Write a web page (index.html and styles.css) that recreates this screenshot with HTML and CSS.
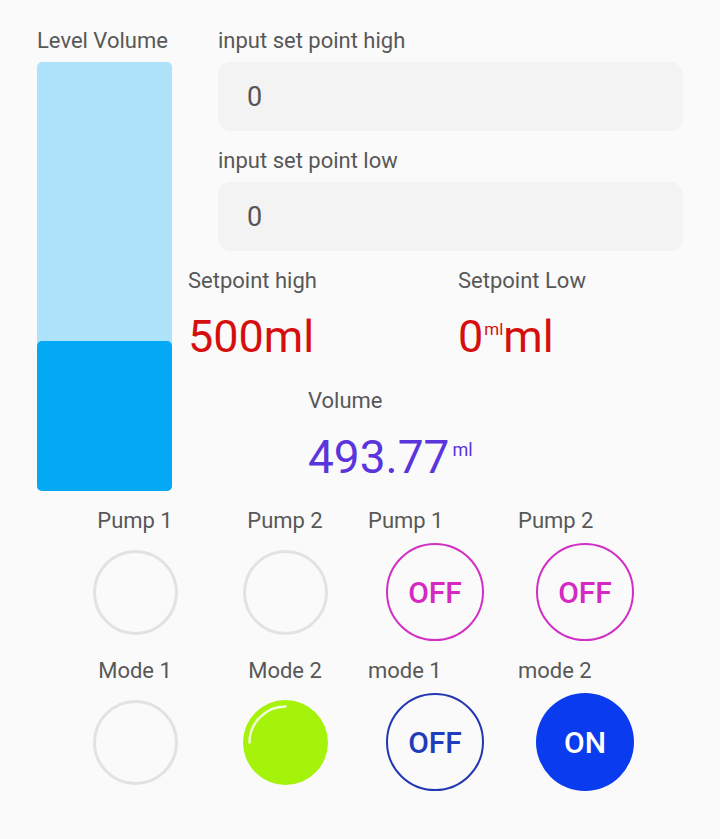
FILE: index.html
```html
<!DOCTYPE html>
<html>
<head>
<meta charset="utf-8">
<link rel="stylesheet" href="styles.css">
</head>
<body>
<div class="page">
  <section class="top">
    <div class="level">
      <div class="label">Level Volume</div>
      <div class="bar"><div class="fill" style="height:35%"></div></div>
    </div>
    <div class="right">
      <div class="inputs">
        <div class="label">input set point high</div>
        <div class="input">0</div>
        <div class="label gap">input set point low</div>
        <div class="input">0</div>
      </div>
      <div class="setpoints">
        <div class="sp">
          <div class="label">Setpoint high</div>
          <div class="big red">500ml</div>
        </div>
        <div class="sp">
          <div class="label">Setpoint Low</div>
          <div class="big red">0<span class="sup sup-red">ml</span>ml</div>
        </div>
      </div>
      <div class="volume">
        <div class="label">Volume</div>
        <div class="big purple">493.77<span class="sup">ml</span></div>
      </div>
    </div>
  </section>
  <section class="grid">
    <div class="cell led-cell">
      <div class="label">Pump 1</div>
      <div class="area"><div class="led"></div></div>
    </div>
    <div class="cell led-cell">
      <div class="label">Pump 2</div>
      <div class="area"><div class="led"></div></div>
    </div>
    <div class="cell btn-cell">
      <div class="label">Pump 1</div>
      <div class="area"><div class="btn magenta">OFF</div></div>
    </div>
    <div class="cell btn-cell">
      <div class="label">Pump 2</div>
      <div class="area"><div class="btn magenta">OFF</div></div>
    </div>
    <div class="cell led-cell">
      <div class="label">Mode 1</div>
      <div class="area"><div class="led"></div></div>
    </div>
    <div class="cell led-cell">
      <div class="label">Mode 2</div>
      <div class="area">
        <div class="led green">
          <svg width="85" height="85" viewBox="0 0 85 85"><path d="M6.5 42.5 A36 36 0 0 1 42.5 6.5" fill="none" stroke="rgba(255,255,255,0.85)" stroke-width="2.5" stroke-linecap="round"/></svg>
        </div>
      </div>
    </div>
    <div class="cell btn-cell">
      <div class="label">mode 1</div>
      <div class="area"><div class="btn blue-off">OFF</div></div>
    </div>
    <div class="cell btn-cell">
      <div class="label">mode 2</div>
      <div class="area"><div class="btn blue-on">ON</div></div>
    </div>
  </section>
</div>
</body>
</html>
```
FILE: styles.css
```css
html, body {
  margin: 0;
  padding: 0;
  background: #fafafa;
}
body {
  font-family: Roboto, "Liberation Sans", sans-serif;
  color: #555;
  width: 720px;
  height: 839px;
  overflow: hidden;
}
.page {
  padding-top: 28px;
}
.label {
  font-size: 22px;
  line-height: 26px;
  color: #585858;
  white-space: nowrap;
}
.top {
  display: flex;
  padding-left: 37px;
}
.level {
  width: 135px;
  flex: none;
  display: flex;
  flex-direction: column;
  gap: 8px;
}
.bar {
  height: 429px;
  background: #ade2fb;
  border-radius: 5px;
  display: flex;
  flex-direction: column;
  justify-content: flex-end;
}
.fill {
  background: #03a9f4;
  border-radius: 5px;
}
.right {
  margin-left: 16px;
  width: 495px;
  flex: none;
  display: flex;
  flex-direction: column;
}
.inputs {
  margin-left: 30px;
  display: flex;
  flex-direction: column;
}
.inputs .label {
  margin-bottom: 8px;
}
.inputs .label.gap {
  margin-top: 17px;
}
.input {
  height: 69px;
  background: #f3f3f3;
  border-radius: 13px;
  display: flex;
  align-items: center;
  padding-left: 29px;
  font-size: 27px;
  color: #555;
}
.setpoints {
  display: grid;
  grid-template-columns: 270px 1fr;
  margin-top: 17px;
}
.sp {
  display: flex;
  flex-direction: column;
  gap: 16px;
}
.big {
  font-size: 45px;
  line-height: 54px;
  white-space: nowrap;
}
.red {
  color: #d50e0e;
}
.purple {
  color: #5a35dc;
  font-size: 46px;
}
.sup {
  font-size: 18px;
  vertical-align: top;
  position: relative;
  top: 10px;
  margin-left: 3px;
  line-height: 20px;
}
.sup-red {
  font-size: 17px;
  top: 9px;
  margin-left: 1px;
  margin-right: 0;
}
.volume {
  margin-left: 120px;
  margin-top: 24px;
  display: flex;
  flex-direction: column;
  gap: 16px;
}
.grid {
  margin-top: 17px;
  padding-left: 60px;
  display: grid;
  grid-template-columns: repeat(4, 150px);
  row-gap: 16px;
}
.cell {
  display: flex;
  flex-direction: column;
  gap: 8px;
}
.led-cell .label {
  text-align: center;
}
.btn-cell .label {
  padding-left: 8px;
}
.area {
  height: 100px;
  display: flex;
  align-items: center;
  justify-content: center;
}
.led {
  width: 85px;
  height: 85px;
  box-sizing: border-box;
  border-radius: 50%;
  border: 3px solid #e2e2e2;
}
.led.green {
  border: none;
  background: #a5f20b;
  position: relative;
}
.led.green svg {
  display: block;
}
.btn {
  width: 98px;
  height: 98px;
  box-sizing: border-box;
  border-radius: 50%;
  display: flex;
  align-items: center;
  justify-content: center;
  font-size: 30px;
  font-weight: 500;
}
.magenta {
  border: 2px solid #d22fc4;
  color: #d529c2;
}
.blue-off {
  border: 2px solid #2437b2;
  color: #1f3cba;
}
.blue-on {
  background: #0a3bee;
  color: #fff;
}
```
